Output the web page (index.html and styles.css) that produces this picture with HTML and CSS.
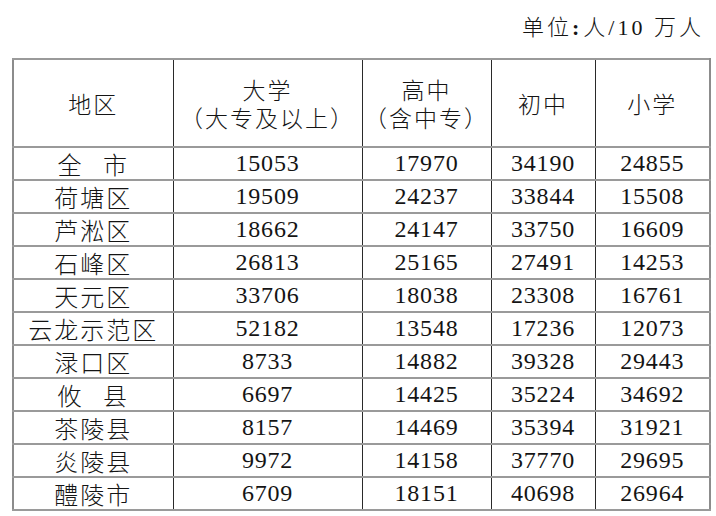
FILE: index.html
```html
<!DOCTYPE html>
<html lang="zh">
<head>
<meta charset="utf-8">
<link rel="stylesheet" href="styles.css">
</head>
<body>
<div class="page">
  <div class="unit">单位<span class="colon">:</span>人/<span class="num">10</span> 万人</div>
  <table class="data">
    <colgroup>
      <col class="c1"><col class="c2"><col class="c3"><col class="c4"><col class="c5">
    </colgroup>
    <thead>
      <tr>
        <th>地区</th>
        <th>大学<br>（大专及以上）</th>
        <th>高中<br>（含中专）</th>
        <th>初中</th>
        <th>小学</th>
      </tr>
    </thead>
    <tbody>
      <tr><td class="name spaced">全 市</td><td>15053</td><td>17970</td><td>34190</td><td>24855</td></tr>
      <tr><td class="name">荷塘区</td><td>19509</td><td>24237</td><td>33844</td><td>15508</td></tr>
      <tr><td class="name">芦淞区</td><td>18662</td><td>24147</td><td>33750</td><td>16609</td></tr>
      <tr><td class="name">石峰区</td><td>26813</td><td>25165</td><td>27491</td><td>14253</td></tr>
      <tr><td class="name">天元区</td><td>33706</td><td>18038</td><td>23308</td><td>16761</td></tr>
      <tr><td class="name">云龙示范区</td><td>52182</td><td>13548</td><td>17236</td><td>12073</td></tr>
      <tr><td class="name">渌口区</td><td>8733</td><td>14882</td><td>39328</td><td>29443</td></tr>
      <tr><td class="name spaced">攸 县</td><td>6697</td><td>14425</td><td>35224</td><td>34692</td></tr>
      <tr><td class="name">茶陵县</td><td>8157</td><td>14469</td><td>35394</td><td>31921</td></tr>
      <tr><td class="name">炎陵县</td><td>9972</td><td>14158</td><td>37770</td><td>29695</td></tr>
      <tr><td class="name">醴陵市</td><td>6709</td><td>18151</td><td>40698</td><td>26964</td></tr>
    </tbody>
  </table>
</div>
</body>
</html>
```

FILE: styles.css
```css
html, body {
  margin: 0;
  padding: 0;
  background: #ffffff;
}

.page {
  width: 716px;
  height: 516px;
  padding: 12px 0 0 12px;
  box-sizing: border-box;
  color: #141414;
  font-family: "Liberation Serif", "Noto Sans CJK SC", serif;
}

.unit {
  width: 692px;
  height: 32px;
  line-height: 32px;
  text-align: right;
  font-family: "Liberation Serif", "Noto Sans CJK SC", serif;
  font-size: 22px;
  font-weight: 300;
  letter-spacing: 3px;
  margin-bottom: 14px;
}

.unit .colon {
  font-weight: bold;
  margin: 0 1px 0 0;
}

.data {
  border-collapse: collapse;
  width: 697px;
  table-layout: fixed;
  border: 2px solid #8c8c8c;
}

.c1 { width: 160px; }
.c2 { width: 189px; }
.c3 { width: 129px; }
.c4 { width: 104px; }
.c5 { width: 115px; }

.data th,
.data td {
  padding: 0;
  text-align: center;
  vertical-align: middle;
  border-top: 2px solid #9a9a9a;
  border-bottom: 2px solid #9a9a9a;
  border-left: 1.5px solid #2a2a2a;
  border-right: 1.5px solid #2a2a2a;
}

.data th {
  height: 86px;
  font-weight: 300;
  font-family: "Noto Sans CJK SC", sans-serif;
  font-size: 23px;
  line-height: 28px;
  letter-spacing: 2px;
}

.data td {
  height: 31px;
  font-size: 24px;
  line-height: 31px;
  letter-spacing: 0.8px;
}

.data td.name {
  font-family: "Noto Sans CJK SC", sans-serif;
  font-weight: 300;
  font-size: 24px;
  letter-spacing: 2px;
}

.data td.spaced {
  word-spacing: 12px;
}

.data tr > :first-child { border-left: 2px solid #8c8c8c; }
.data tr > :last-child { border-right: 2px solid #8c8c8c; }
```
